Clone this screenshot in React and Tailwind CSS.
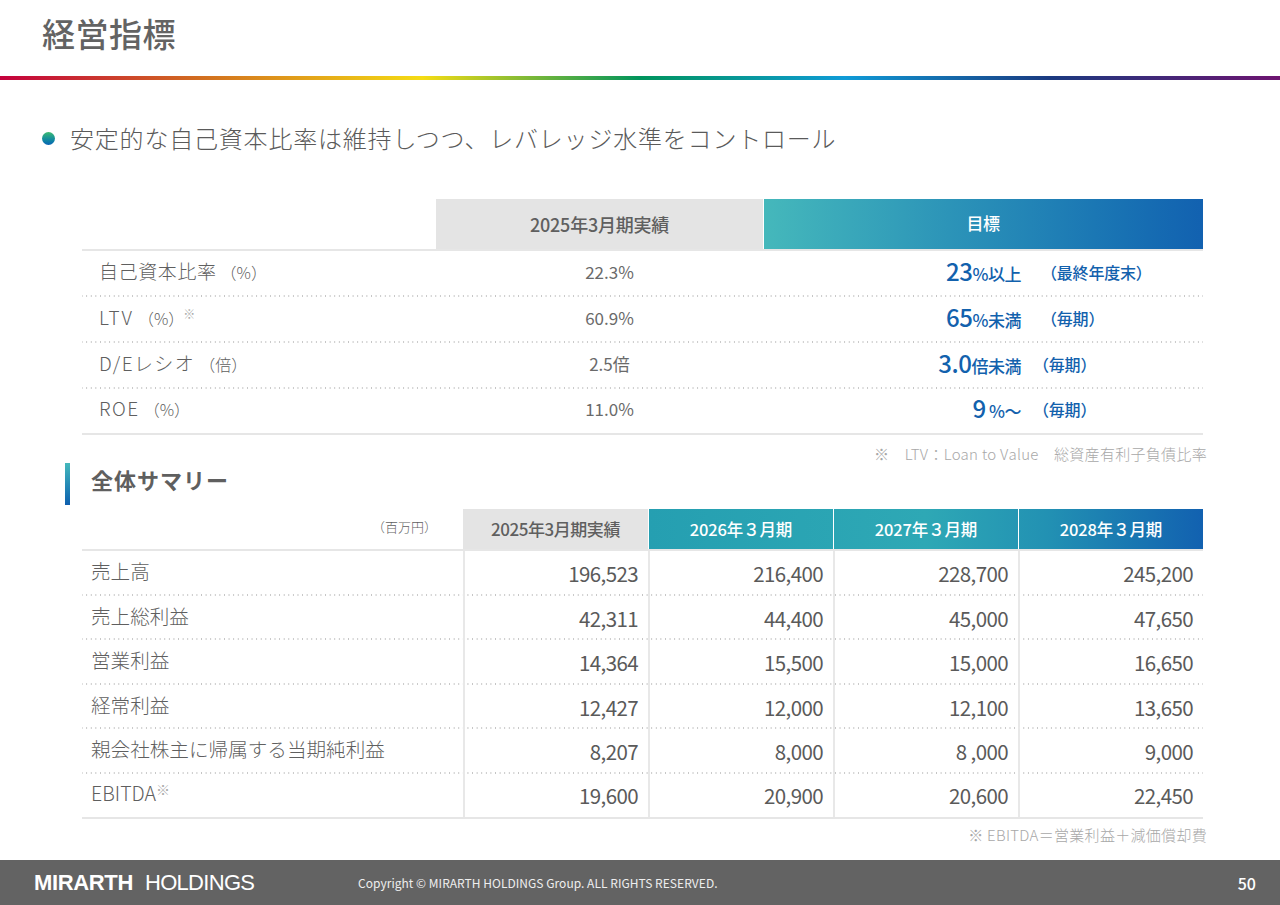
const jp = "font-['Noto_Sans_CJK_JP','Noto_Sans',sans-serif]";
const dots = "bg-[radial-gradient(circle,#c4c4c4_0.9px,transparent_1px)] bg-[length:4.6px_2px] bg-bottom bg-repeat-x";

const targets = [
  { label: "自己資本比率", spacing: "tracking-[0.6px]", unit: "（%）", actual: "22.3%", big: "23", small: "%以上", term: "（最終年度末）", gap: "ml-[20px]" },
  { label: "LTV", spacing: "tracking-[2px]", unit: "（%）", sup: "※", actual: "60.9%", big: "65", small: "%未満", term: "（毎期）", gap: "ml-[20px]" },
  { label: "D/Eレシオ", spacing: "tracking-[1.4px]", unit: "（倍）", actual: "2.5倍", big: "3.0", small: "倍未満", term: "（毎期）", gap: "ml-[12px]" },
  { label: "ROE", spacing: "tracking-[1.5px]", unit: "（%）", actual: "11.0%", big: "9", small: " %～", term: "（毎期）", gap: "ml-[12px]" },
];

const summary = [
  { label: "売上高", values: ["196,523", "216,400", "228,700", "245,200"] },
  { label: "売上総利益", values: ["42,311", "44,400", "45,000", "47,650"] },
  { label: "営業利益", values: ["14,364", "15,500", "15,000", "16,650"] },
  { label: "経常利益", values: ["12,427", "12,000", "12,100", "13,650"] },
  { label: "親会社株主に帰属する当期純利益", values: ["8,207", "8,000", "8 ,000", "9,000"] },
  { label: "EBITDA", sup: true, values: ["19,600", "20,900", "20,600", "22,450"] },
];

function TargetTable() {
  return (
    <div className="ml-[82px] w-[1121px]">
      <div className="grid h-[52px] grid-cols-[354px_327px_440px] border-b-2 border-[#e6e6e6]">
        <div />
        <div className="flex items-center justify-center bg-[#e4e4e4] text-[18px] font-medium tracking-[-0.25px] text-[#5f5f5f]">
          2025年3月期実績
        </div>
        <div className="ml-[1px] flex items-center justify-center bg-gradient-to-r from-[#45b8bb] to-[#1261b0] pb-[2px] pr-[1px] text-[17px] font-medium tracking-[-0.4px] text-white">
          目標
        </div>
      </div>
      {targets.map((row, i) => (
        <div
          key={row.label}
          className={
            "grid h-[46px] grid-cols-[354px_327px_440px] items-center " +
            (i < 3 ? dots : "border-b-2 border-[#e6e6e6]")
          }
        >
          <div className={"flex items-baseline pb-[6px] pl-[17px] text-[19px] font-light text-[#5f5f5f] " + row.spacing}>
            {row.label}
            <span className="ml-[4px] text-[16px] tracking-normal">{row.unit}</span>
            {row.sup && <span className="relative -top-[6px] -ml-[1px] text-[12px] text-[#aaa]">{row.sup}</span>}
          </div>
          <div className="pb-[4px] pl-[20px] text-center text-[17px] text-[#6a6a6a]">{row.actual}</div>
          <div className="flex items-baseline pb-[7px] text-[#1261ad]">
            <div className="w-[258px] whitespace-pre text-right font-medium">
              <span className="text-[24px] tracking-[-0.4px]">{row.big}</span>
              <span className="text-[17px] tracking-[-0.5px]">{row.small}</span>
            </div>
            <div className={"-translate-y-[2px] text-[16px] font-medium tracking-[-0.2px] " + row.gap}>{row.term}</div>
          </div>
        </div>
      ))}
    </div>
  );
}

function SummaryTable() {
  const cols = "grid grid-cols-[381px_185px_185px_185px_185px]";
  return (
    <div className="ml-[82px] w-[1121px]">
      <div className={cols + " h-[42px] border-b-2 border-[#e6e6e6]"}>
        <div className="pr-[26px] pt-[8px] text-right text-[13px] font-light text-[#5f5f5f]">（百万円）</div>
        <div className="flex items-center justify-center bg-[#e4e4e4] text-[17px] font-medium tracking-[-0.45px] text-[#5f5f5f]">
          2025年3月期実績
        </div>
        <div className="col-span-3 grid grid-cols-3 bg-[linear-gradient(90deg,#259fb1_0%,#2ea8b5_50%,#2291b3_72%,#1261b0_100%)] text-[16.5px] font-medium tracking-[-0.15px] text-white">
          <div className="flex items-center justify-center border-l border-white">2026年３月期</div>
          <div className="flex items-center justify-center border-l border-white">2027年３月期</div>
          <div className="flex items-center justify-center border-l border-white">2028年３月期</div>
        </div>
      </div>
      {summary.map((row, i) => (
        <div
          key={row.label}
          className={cols + " h-[44.6px] " + (i < 5 ? dots : "border-b-2 border-[#e6e6e6]")}
        >
          <div className="flex items-center pb-[5px] pl-[9px] text-[19.6px] font-light text-[#5f5f5f]">
            {row.label}
            {row.sup && <span className="relative -top-[3px] text-[14px] text-[#aaa]">※</span>}
          </div>
          {row.values.map((v, j) => (
            <div
              key={j}
              className="flex items-center justify-end border-l-2 border-[#e8e8e8] pr-[10px] text-[20.5px] tracking-[-0.6px] text-[#5a5a5a]"
            >
              {v}
            </div>
          ))}
        </div>
      ))}
    </div>
  );
}

export default function App() {
  return (
    <div className={jp + " flex h-[905px] w-[1280px] flex-col overflow-hidden bg-white"}>
      <header className="flex h-[76px] items-center pb-[8px] pl-[42px] text-[33px] font-medium tracking-[0.5px] text-[#636363]">
        経営指標
      </header>
      <div className="h-[4px] bg-[linear-gradient(90deg,#c4003d_0%,#d2701f_16%,#f5dc14_33%,#00945c_50%,#0f9bd7_66%,#1a3a80_82%,#6e1470_100%)]" />

      <div className="mt-[44px] flex h-[28px] items-center pl-[42px]">
        <span className="h-[13px] w-[13px] rounded-full bg-gradient-to-b from-[#3cba6e] to-[#0f62b5]" />
        <p className="ml-[15px] text-[24px] font-light tracking-[0.8px] text-[#5a5a5a]">
          安定的な自己資本比率は維持しつつ、レバレッジ水準をコントロール
        </p>
      </div>

      <div className="mt-[47px]">
        <TargetTable />
      </div>

      <div className="relative">
        <p className="absolute right-[73px] top-[8px] whitespace-pre text-[15px] font-light tracking-[0.3px] text-[#a8a8a8]">
          ※　LTV：Loan to Value　総資産有利子負債比率
        </p>
      </div>

      <div className="ml-[65px] mt-[28px] flex h-[42px] items-center">
        <span className="h-[42px] w-[5px] bg-gradient-to-b from-[#45b8bb] to-[#0f5fae]" />
        <h2 className="ml-[21px] pb-[10px] text-[22px] font-bold tracking-[1px] text-[#5f5f5f]">全体サマリー</h2>
      </div>

      <div className="mt-[4px]">
        <SummaryTable />
      </div>

      <p className="mr-[73px] mt-[5px] h-[20px] text-right text-[15px] font-light tracking-[0.3px] text-[#a8a8a8]">
        ※ EBITDA＝営業利益＋減価償却費
      </p>

      <footer className="mt-auto flex h-[45px] items-center bg-[#636363] text-white">
        <div className="ml-[34px] flex w-[324px] items-baseline font-['Liberation_Sans',sans-serif] text-[22px] leading-none">
          <span className="font-bold tracking-[-0.35px]">MIRARTH</span>
          <span className="ml-[12px] tracking-[-0.7px]">HOLDINGS</span>
        </div>
        <p className="text-[12px] tracking-[0.03px] text-[#eee]">Copyright © MIRARTH HOLDINGS Group. ALL RIGHTS RESERVED.</p>
        <span className="ml-auto mr-[24px] text-[16px] font-medium">50</span>
      </footer>
    </div>
  );
}
